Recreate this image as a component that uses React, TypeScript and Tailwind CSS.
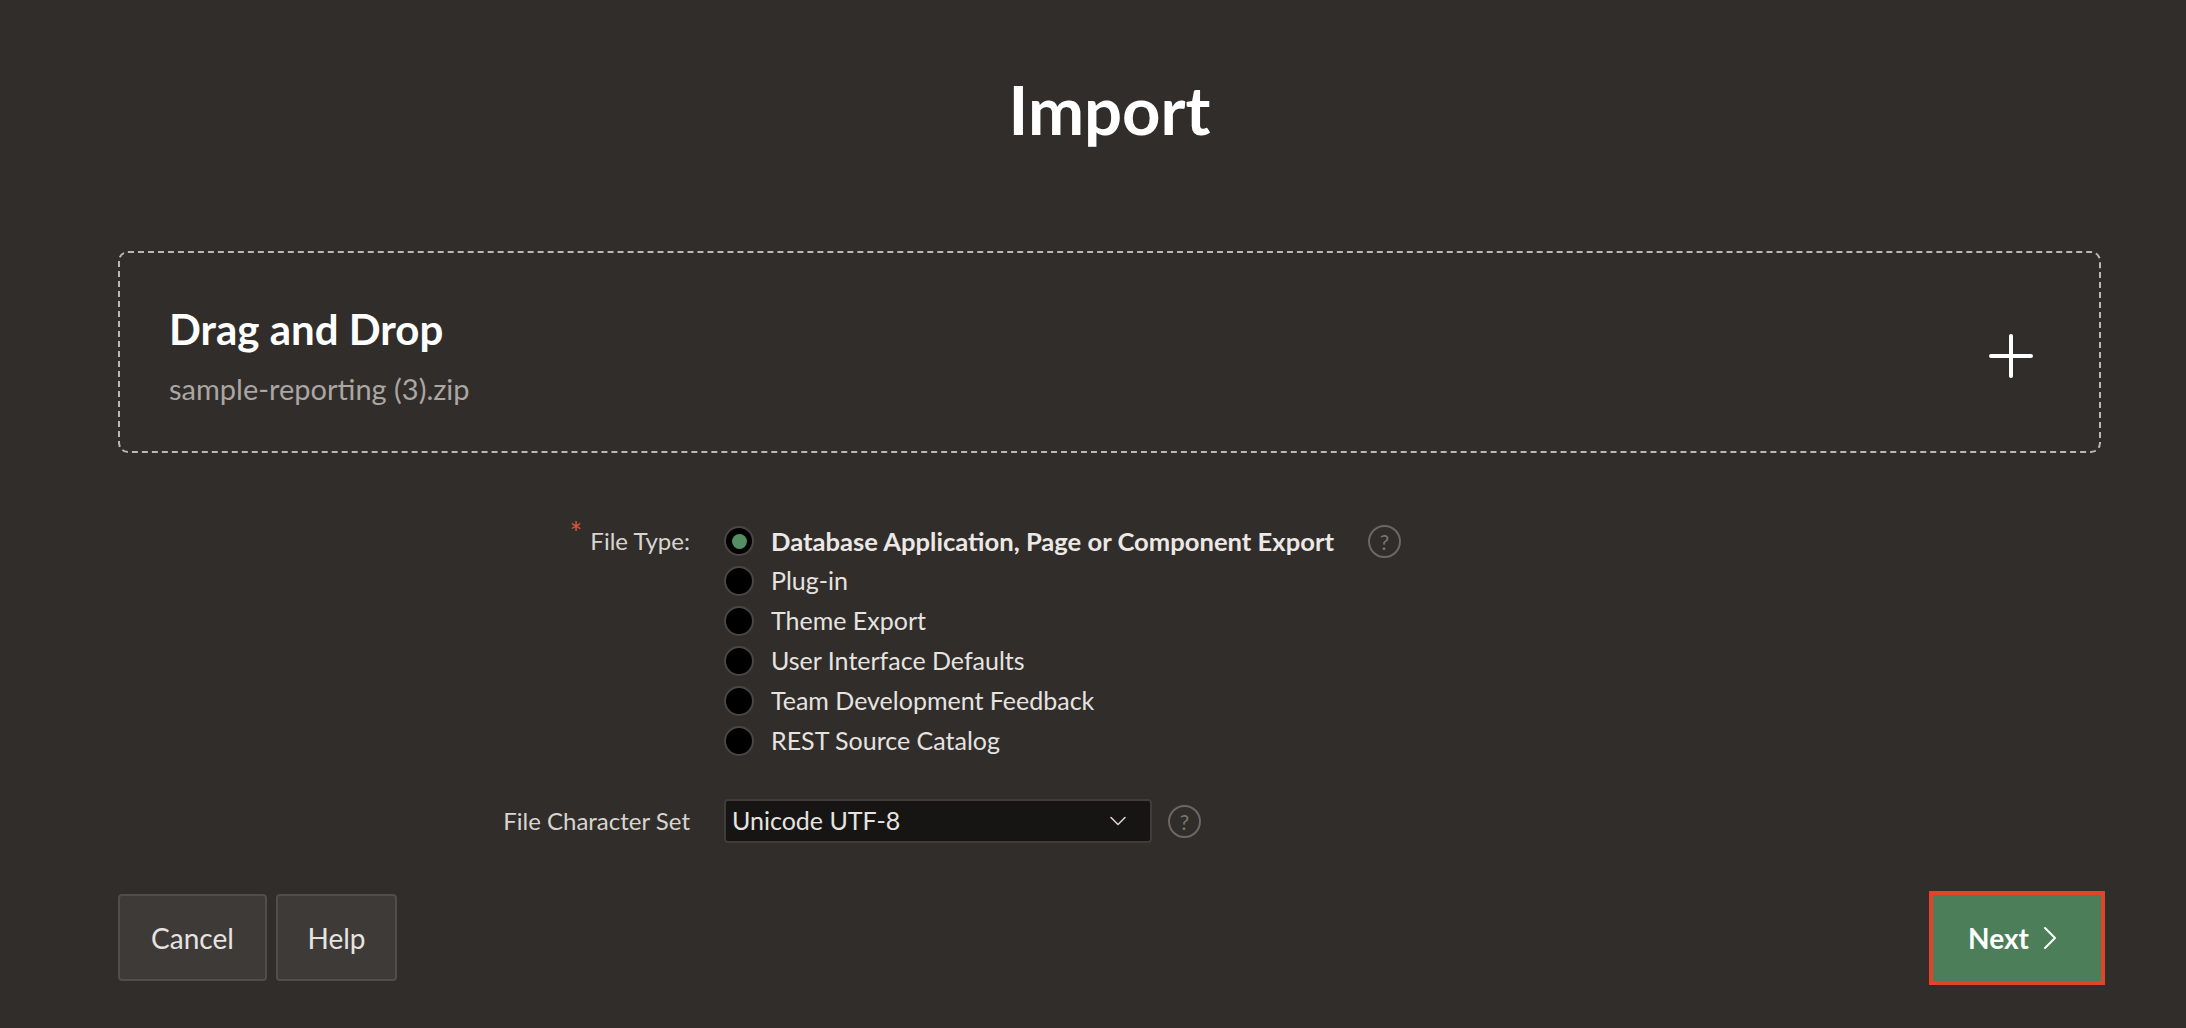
import { ChevronDown, ChevronRight } from 'lucide-react'

const fileTypes = [
  'Database Application, Page or Component Export',
  'Plug-in',
  'Theme Export',
  'User Interface Defaults',
  'Team Development Feedback',
  'REST Source Catalog',
]

function HelpIcon({ className = '' }: { className?: string }) {
  return (
    <span
      className={`flex h-[33px] w-[33px] shrink-0 items-center justify-center rounded-full border-2 border-[#6b6763] text-[21px] leading-none text-[#7b7672] ${className}`}
    >
      ?
    </span>
  )
}

function Radio({ checked }: { checked?: boolean }) {
  return (
    <span className="flex h-[30px] w-[30px] shrink-0 items-center justify-center rounded-full border-2 border-[#4a4643] bg-black">
      {checked && <span className="h-[15px] w-[15px] rounded-full bg-[#548e64]" />}
    </span>
  )
}

export default function App() {
  return (
    <div className="min-h-screen bg-[#312d2a] pl-[118px] pr-[85px] font-['Lato',sans-serif] text-[#e6e3e0]">
      {/* Title */}
      <h1 className="pt-[69px] text-center text-[67px] font-bold leading-[80px] text-white">Import</h1>

      {/* Drop zone */}
      <div className="mt-[102px] flex items-center justify-between rounded-[10px] border-2 border-dashed border-[#bcb8b4] pb-[44px] pl-[49px] pr-[66px] pt-[51px]">
        <div>
          <div className="text-[42px] font-bold leading-[50px] text-white">Drag and Drop</div>
          <div className="mt-[17px] text-[29px] leading-[36px] text-[#aaa6a2]">sample-reporting (3).zip</div>
        </div>
        <svg width="44" height="44" viewBox="0 0 44 44" className="shrink-0">
          <path d="M22 2v40M2 22h40" stroke="#ffffff" strokeWidth="4" strokeLinecap="round" />
        </svg>
      </div>

      {/* Form */}
      <div className="mt-[68px] grid grid-cols-[572px_1fr] gap-x-[34px] text-[25px]">
        <div className="flex h-[40px] items-center justify-end text-[24px] text-[#d8d5d1]">
          <span className="relative -top-[9px] mr-[8px] text-[30px] leading-none text-[#d9553b]">*</span>
          File Type:
        </div>
        <div className="flex flex-col">
          {fileTypes.map((t, i) => (
            <div key={t} className="flex h-[40px] items-center">
              <Radio checked={i === 0} />
              <span className={`ml-[17px] ${i === 0 ? 'text-[25.6px] font-bold text-[#ebe8e5]' : 'text-[#e6e3e0]'}`}>{t}</span>
              {i === 0 && <HelpIcon className="ml-[34px]" />}
            </div>
          ))}
        </div>

        <div className="mt-[38px] flex h-[44px] items-center justify-end text-[24px] text-[#d8d5d1]">File Character Set</div>
        <div className="mt-[38px] flex items-center">
          <div className="flex h-[44px] w-[428px] items-center justify-between rounded-[4px] border-2 border-[#403c39] bg-[#161513] pl-[6px] pr-[18px] text-[#e6e3e0]">
            <span>Unicode UTF-8</span>
            <ChevronDown className="h-[28px] w-[28px] text-[#d6d3cf]" strokeWidth={1.4} />
          </div>
          <HelpIcon className="ml-[16px]" />
        </div>
      </div>

      {/* Buttons */}
      <div className="mt-[51px] flex items-center justify-between text-[28px]">
        <div className="flex gap-[9px]">
          <button className="h-[87px] w-[149px] rounded-[4px] border-2 border-[#514d49] bg-[#3d3a37] text-[#e6e3e0]">
            Cancel
          </button>
          <button className="h-[87px] w-[121px] rounded-[4px] border-2 border-[#514d49] bg-[#3d3a37] text-[#e6e3e0]">
            Help
          </button>
        </div>
        <button className="flex h-[86px] w-[168px] items-center justify-center gap-[1px] bg-[#4b7e59] pl-[4px] font-bold text-white outline-4 outline-[#e2442b]">
          Next
          <ChevronRight className="h-[40px] w-[40px]" strokeWidth={1.2} />
        </button>
      </div>
    </div>
  )
}
